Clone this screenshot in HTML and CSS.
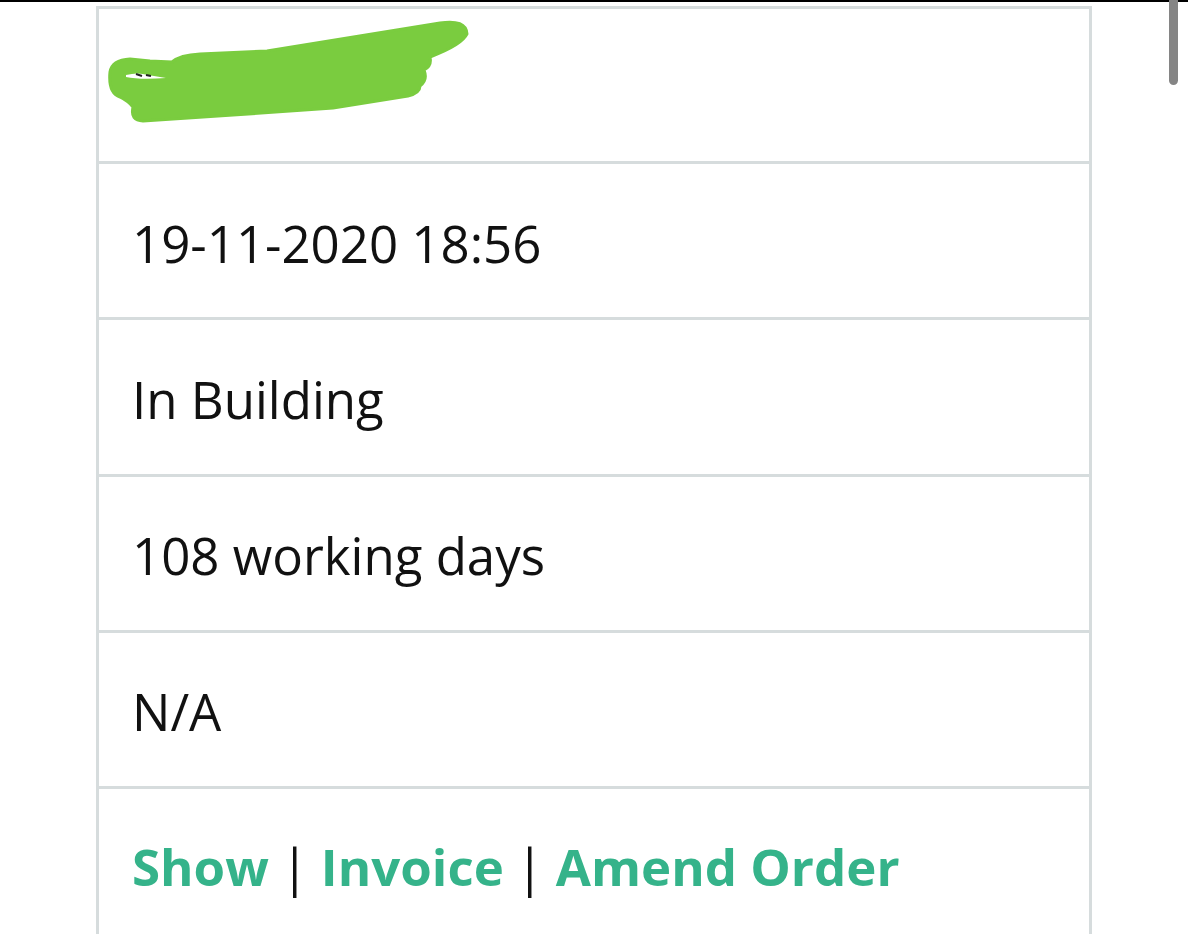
FILE: index.html
```html
<html>
    <head>
        <link rel="stylesheet" href="styles.css">
    </head>
    <body>
        <div class="scrollbar"></div>
        <div class="order">
            <div class="row name">
                <svg class="scribble" width="380" height="110" viewBox="100 20 380 110">
                    <path d="M110 72 Q112 60 130 59 L150 61 L172 62 Q180 55 200 54 L267 51 L440 23 Q466 19 467 34 Q462 45 430 57 Q432 66 424 70 Q428 80 420 86 Q420 93 408 96 L333 108 L233 115 L143 121 Q130 121 133 107 Q128 101 120 97 Q108 93 110 72 Z" />
                    <path class="glint" d="M126 75 Q138 72 148 75 L166 78 Q140 80 126 77 Z" />
                    <path class="tick" d="M136 74 L142 76 M146 75 L151 76" />
                </svg>
            </div>
            <div class="row">19-11-2020 18:56</div>
            <div class="row">In Building</div>
            <div class="row">108 working days</div>
            <div class="row">N/A</div>
            <div class="row actions">
                <a href="#">Show</a>
                <span class="sep">|</span>
                <a href="#">Invoice</a>
                <span class="sep">|</span>
                <a href="#">Amend Order</a>
            </div>
        </div>
    </body>
</html>
```

FILE: styles.css
```css
body
{
    margin: 0;
    border-top: 2px solid #000;
    background: #fff;
    font-family: "Open Sans", "Liberation Sans", sans-serif;
    color: #111;
    overflow: hidden;
    height: 932px;
}
.scrollbar
{
    position: absolute;
    top: 0;
    left: 1169px;
    width: 9px;
    height: 85px;
    border-radius: 0 0 5px 5px;
    background: #858585;
}
.order
{
    width: 990px;
    margin: 4px 0 0 96px;
    border: 3px solid #d6dcdd;
    border-bottom: none;
}
.row
{
    box-sizing: border-box;
    padding: 4px 0 0 33px;
    display: flex;
    align-items: center;
    font-size: 51px;
    border-top: 3px solid #d6dcdd;
    height: 156.25px;
}
.row:first-child
{
    border-top: none;
    height: 152px;
}
.name
{
    padding: 0;
    align-items: flex-start;
}
.scribble
{
    display: block;
    margin: 11px 0 0 1px;
}
.scribble path
{
    fill: #7acc3f;
    stroke: #7acc3f;
    stroke-width: 3;
    stroke-linejoin: round;
}
.scribble .glint
{
    fill: #fff;
    stroke: none;
}
.scribble .tick
{
    fill: none;
    stroke: #222;
    stroke-width: 2;
}
.actions
{
    padding-top: 0;
}
.actions a
{
    color: #35b38a;
    font-weight: bold;
    text-decoration: none;
}
.sep
{
    margin: 0 12px;
    color: #111;
}
```
